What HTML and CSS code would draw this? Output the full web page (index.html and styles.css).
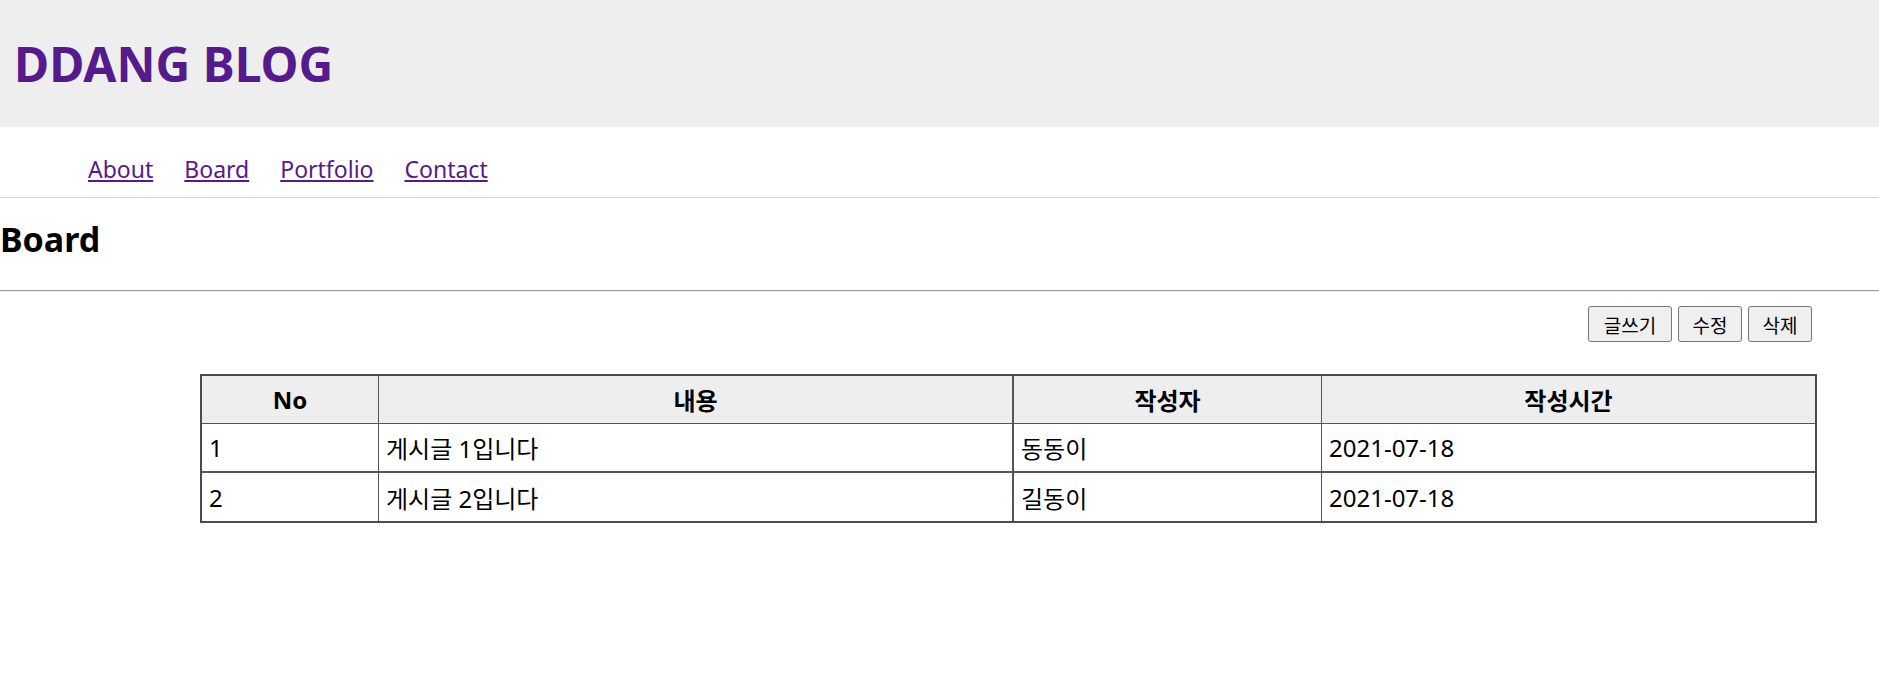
FILE: index.html
```html
<!DOCTYPE html>
<html lang="ko">
<head>
<meta charset="utf-8">
<title>DDANG BLOG</title>
<link rel="stylesheet" href="styles.css">
</head>
<body>
<header class="site-header">
  <h1 class="site-title">DDANG BLOG</h1>
</header>
<nav class="site-nav">
  <a href="#about">About</a>
  <a href="#board">Board</a>
  <a href="#portfolio">Portfolio</a>
  <a href="#contact">Contact</a>
</nav>
<section class="page-head">
  <h2 class="page-title">Board</h2>
</section>
<div class="rule"></div>
<div class="toolbar">
  <button class="btn btn-write" type="button">글쓰기</button>
  <button class="btn" type="button">수정</button>
  <button class="btn" type="button">삭제</button>
</div>
<div class="board-wrap">
  <table class="board">
    <thead>
      <tr>
        <th class="c1">No</th>
        <th class="c2">내용</th>
        <th class="c3">작성자</th>
        <th class="c4">작성시간</th>
      </tr>
    </thead>
    <tbody>
      <tr class="r1">
        <td>1</td>
        <td class="c2">게시글 1입니다</td>
        <td>동동이</td>
        <td class="c4">2021-07-18</td>
      </tr>
      <tr class="r2">
        <td>2</td>
        <td class="c2">게시글 2입니다</td>
        <td>길동이</td>
        <td class="c4">2021-07-18</td>
      </tr>
    </tbody>
  </table>
</div>
</body>
</html>
```
FILE: styles.css
```css
* { box-sizing: border-box; }
html, body {
  margin: 0;
  padding: 0;
  background: #fff;
  font-family: "Noto Sans", "Noto Sans CJK KR", sans-serif;
  color: #000;
}
.site-header {
  height: 127px;
  background: #eeeeee;
  display: flex;
  align-items: center;
  padding-left: 14px;
}
.site-title {
  margin: 0;
  font-size: 48px;
  line-height: 1;
  font-weight: 700;
  color: #551a8b;
  letter-spacing: 0;
}
.site-nav {
  display: flex;
  gap: 31px;
  padding: 31px 0 0 88px;
  height: 71px;
  border-bottom: 1px solid #d5d4dd;
  font-size: 23px;
  line-height: 1;
}
.site-nav a {
  color: #551a8b;
  text-decoration: underline;
  text-underline-offset: 2px;
  text-decoration-thickness: 2px;
}
.page-head {
  padding: 24px 0 0 0;
  height: 92px;
}
.page-title {
  margin: 0;
  font-size: 34px;
  line-height: 1;
  font-weight: 700;
}
.rule {
  height: 2px;
  border-top: 1px solid #9b9b9b;
  border-bottom: 1px solid #eeeeee;
}
.toolbar {
  display: flex;
  justify-content: flex-end;
  gap: 6px;
  padding: 14px 67px 0 0;
}
.btn {
  height: 36px;
  padding: 0 12px;
  min-width: 64px;
  font-family: "Noto Sans CJK KR", "Noto Sans", sans-serif;
  font-size: 19px;
  line-height: 1;
  color: #000;
  background: #efefef;
  border: 1px solid #767676;
  border-radius: 3px;
}
.btn-write { width: 84px; }
.board-wrap {
  padding: 32px 62px 0 200px;
}
.board {
  width: 100%;
  table-layout: fixed;
  border-collapse: separate;
  border-spacing: 0;
  border: 2px solid #4b4b4b;
  font-size: 24px;
}
.board th, .board td {
  border-right: 1px solid #555;
  border-bottom: 1px solid #555;
  padding: 0 7px;
  vertical-align: middle;
}
.board th {
  height: 48px;
  background: #eeeeee;
  font-weight: 700;
  text-align: center;
}
.board td {
  height: 48px;
  text-align: left;
  font-weight: 400;
}
.board .c1 { width: 177px; }
.board .c2 { width: 635px; border-right-width: 2px; }
.board .c3 { width: 308px; }
.board .c4 { border-right: none; }
.board tr.r1 td { height: 49px; border-bottom-width: 2px; }
.board tr.r2 td { border-bottom: none; }
```
